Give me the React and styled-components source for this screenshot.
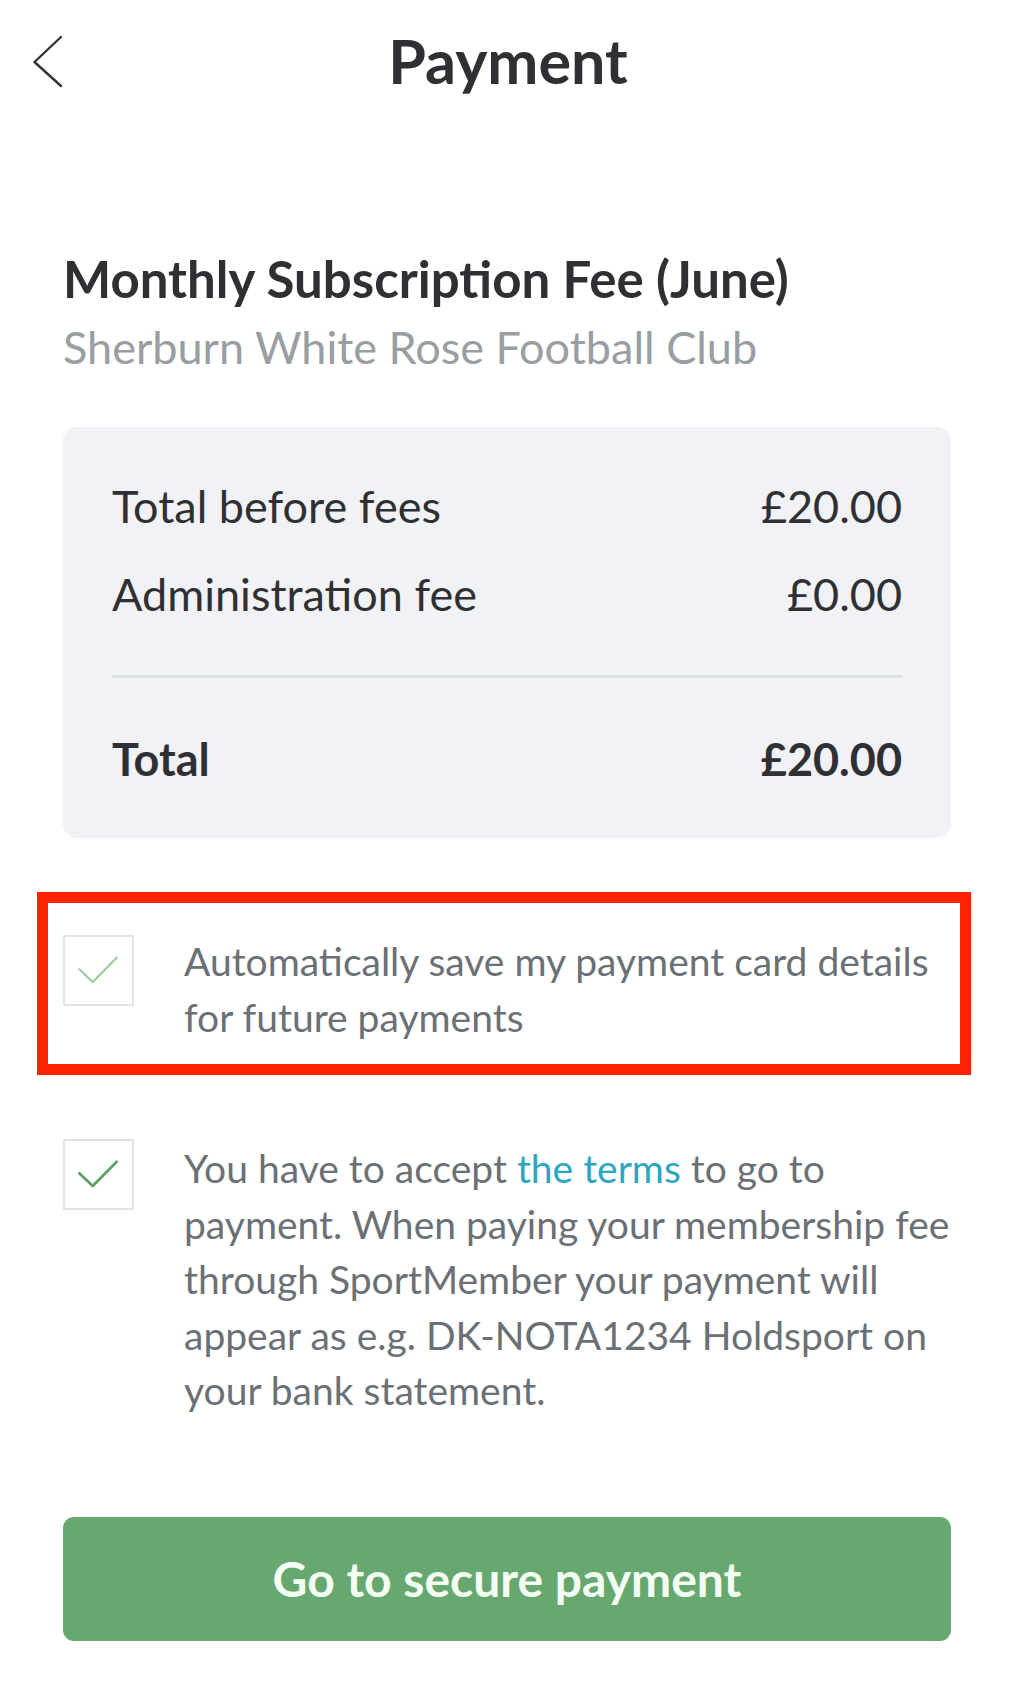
import React from 'react';
import styled, { createGlobalStyle } from 'styled-components';

const GlobalStyle = createGlobalStyle`
  html, body {
    margin: 0;
    padding: 0;
    background: #ffffff;
  }
  body {
    font-family: Lato, 'Open Sans', 'Liberation Sans', sans-serif;
    color: #303135;
  }
`;

const Screen = styled.div`
  width: 1020px;
  min-height: 1691px;
  background: #fff;
`;

const Header = styled.header`
  display: grid;
  grid-template-columns: 1fr auto 1fr;
  align-items: center;
  height: 80px;
  padding: 21px 37px 0 33px;
`;

const BackButton = styled.button`
  justify-self: start;
  display: flex;
  padding: 0;
  border: 0;
  background: none;
  cursor: pointer;
`;

const Title = styled.h1`
  margin: 0;
  font-size: 61px;
  line-height: 80px;
  font-weight: 700;
  color: #2f3033;
`;

const Content = styled.main`
  padding: 0 69px 50px 63px;
`;

const FeeTitle = styled.h2`
  margin: 147px 0 0;
  font-size: 51px;
  line-height: 62px;
  font-weight: 700;
  color: #2f3033;
`;

const ClubName = styled.div`
  margin-top: 9px;
  font-size: 45px;
  line-height: 56px;
  color: #989ea2;
`;

const Summary = styled.section`
  margin-top: 52px;
  padding: 35px 49px;
  background: #f1f2f6;
  border-radius: 14px;
`;

const SummaryRow = styled.div`
  display: flex;
  justify-content: space-between;
  font-size: 45px;
  line-height: 88px;
  font-weight: ${(p) => (p.$bold ? 700 : 400)};
  color: #2f3033;
`;

const Divider = styled.hr`
  margin: 37px 0;
  border: 0;
  height: 3px;
  background: #dce1e5;
`;

const Highlight = styled.div`
  margin: 54px -20px 0 -26px;
  padding: 31px 15px 19px;
  border: 11px solid #ff2400;
`;

const OptionRow = styled.label`
  display: flex;
  align-items: flex-start;
  gap: 50px;
  margin-top: ${(p) => p.$gap || 0}px;
`;

const Box = styled.span`
  flex: none;
  box-sizing: border-box;
  width: 71px;
  height: 71px;
  margin-top: ${(p) => p.$offset}px;
  border: 2px solid #e2e3e3;
  background: #fff;
`;

const OptionText = styled.p`
  margin: 0;
  font-size: 39px;
  line-height: 55.5px;
  color: #6a7075;
  white-space: nowrap;
`;

const TermsLink = styled.a`
  color: #2ba7c3;
  text-decoration: none;
`;

const PayButton = styled.button`
  display: block;
  width: 100%;
  height: 124px;
  margin-top: 98px;
  border: 0;
  border-radius: 11px;
  background: #67a770;
  color: #f4fff4;
  font-family: Lato, 'Open Sans', 'Liberation Sans', sans-serif;
  font-size: 48px;
  font-weight: 700;
  cursor: pointer;
`;

const Chevron = () => (
  <svg width='30' height='53' viewBox='0 0 30 53' fill='none'>
    <path
      d='M28 2 L1.5 27 L28 51'
      stroke='#333437'
      strokeWidth='2.4'
      strokeLinecap='round'
      strokeLinejoin='round'
    />
  </svg>
);

const Check = ({ color, width, offset = 1 }) => (
  <Box $offset={offset}>
    <svg width='67' height='67' viewBox='2 2 67 67' fill='none'>
      <path
        d='M16.3 34.3 L29.7 47 L53.7 22.7'
        stroke={color}
        strokeWidth={width}
        strokeLinecap='round'
        strokeLinejoin='round'
      />
    </svg>
  </Box>
);

const lines = [
  { label: 'Total before fees', value: '£20.00' },
  { label: 'Administration fee', value: '£0.00' },
];

const App = () => {
  return (
    <Screen>
      <GlobalStyle />
      <Header>
        <BackButton aria-label='Back'>
          <Chevron />
        </BackButton>
        <Title>Payment</Title>
        <span />
      </Header>

      <Content>
        <FeeTitle>Monthly Subscription Fee (June)</FeeTitle>
        <ClubName>Sherburn White Rose Football Club</ClubName>

        <Summary>
          {lines.map((l) => (
            <SummaryRow key={l.label}>
              <span>{l.label}</span>
              <span>{l.value}</span>
            </SummaryRow>
          ))}
          <Divider />
          <SummaryRow $bold>
            <span>Total</span>
            <span>£20.00</span>
          </SummaryRow>
        </Summary>

        <Highlight>
          <OptionRow>
            <Check color='#9ccaa5' width={2.2} />
            <OptionText>
              Automatically save my payment card details
              <br />
              for future payments
            </OptionText>
          </OptionRow>
        </Highlight>

        <OptionRow $gap={66}>
          <Check color='#5f9f6b' width={2.8} offset={-2} />
          <OptionText>
            You have to accept <TermsLink href='#'>the terms</TermsLink> to go to
            <br />
            payment. When paying your membership fee
            <br />
            through SportMember your payment will
            <br />
            appear as e.g. DK-NOTA1234 Holdsport on
            <br />
            your bank statement.
          </OptionText>
        </OptionRow>

        <PayButton>Go to secure payment</PayButton>
      </Content>
    </Screen>
  );
};

export default App;
